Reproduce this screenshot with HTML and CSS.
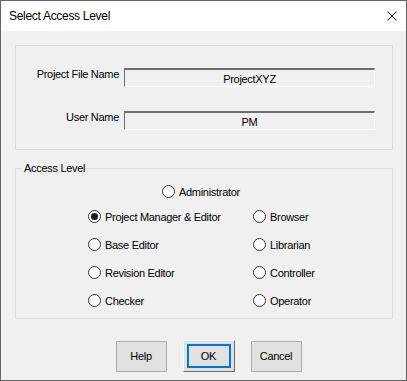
FILE: index.html
```html
<!DOCTYPE html>
<html lang="en">
<head>
    <meta charset="UTF-8">
    <title>Select Access Level</title>
    <link rel="stylesheet" href="styles.css">
</head>
<body>
    <div class="dialog">
        <div class="titlebar">
            <span class="title">Select Access Level</span>
            <svg class="close" width="10" height="10" viewBox="0 0 10 10">
                <path d="M0.5 0.5 L9.5 9.5 M9.5 0.5 L0.5 9.5" stroke="#000" stroke-width="1" fill="none"/>
            </svg>
        </div>
        <div class="content">
            <div class="group files">
                <label class="field-label">Project File Name</label>
                <div class="field-box">ProjectXYZ</div>
                <label class="field-label">User Name</label>
                <div class="field-box">PM</div>
            </div>

            <fieldset class="group levels">
                <legend>Access Level</legend>
                <div class="level-list">
                    <div class="radio admin"><span class="dot"></span>Administrator</div>
                    <div class="radio-grid">
                        <div class="radio"><span class="dot checked"></span>Project Manager &amp; Editor</div>
                        <div class="radio"><span class="dot"></span>Browser</div>
                        <div class="radio"><span class="dot"></span>Base Editor</div>
                        <div class="radio"><span class="dot"></span>Librarian</div>
                        <div class="radio"><span class="dot"></span>Revision Editor</div>
                        <div class="radio"><span class="dot"></span>Controller</div>
                        <div class="radio"><span class="dot"></span>Checker</div>
                        <div class="radio"><span class="dot"></span>Operator</div>
                    </div>
                </div>
            </fieldset>

            <div class="buttons">
                <button class="btn">Help</button>
                <button class="btn default">OK</button>
                <button class="btn">Cancel</button>
            </div>
        </div>
    </div>
</body>
</html>
```

FILE: styles.css
```css
body {
    margin: 0;
    padding: 0;
    background-color: #fff;
    font-family: "Liberation Sans", Arial, sans-serif;
    font-size: 11px;
    letter-spacing: -0.3px;
    color: #000;
}
.dialog {
    width: 407px;
    height: 381px;
    box-sizing: border-box;
    border: 1px solid #646464;
    background-color: #f0f0f0;
    display: flex;
    flex-direction: column;
}
.titlebar {
    height: 30px;
    background-color: #fff;
    display: flex;
    align-items: center;
    justify-content: space-between;
    padding: 0 9px 0 8px;
}
.title {
    font-size: 12px;
    letter-spacing: -0.3px;
}
.close {
    display: block;
}
.content {
    padding: 14px 13px 0 14px;
}
.group {
    border: 1px solid #dcdcdc;
    margin: 0;
}
.files {
    display: grid;
    grid-template-columns: 103px 251px;
    column-gap: 5px;
    row-gap: 24px;
    padding: 22px 0 19px 0;
    align-items: center;
}
.field-label {
    text-align: right;
    margin-top: -8px;
}
.field-box {
    height: 19px;
    box-sizing: border-box;
    border-style: solid;
    border-width: 2px 1px 1px 1px;
    border-color: #6d6d6d #fff #fff #6d6d6d;
    text-align: center;
    line-height: 17px;
    padding-top: 1px;
}
.levels {
    margin-top: 11px;
    padding: 0;
}
.levels legend {
    padding: 0 1px;
    margin-left: 7px;
    line-height: 14px;
}
.level-list {
    padding: 10px 0 11px 72px;
}
.radio {
    display: flex;
    align-items: center;
    gap: 4px;
    height: 13px;
    white-space: nowrap;
}
.admin {
    margin-left: 74px;
    margin-bottom: 12px;
}
.radio-grid {
    display: grid;
    grid-template-columns: 165px auto;
    row-gap: 15px;
}
.dot {
    width: 13px;
    height: 13px;
    box-sizing: border-box;
    border: 1px solid #333;
    border-radius: 50%;
    background-color: #fff;
    flex: none;
    position: relative;
}
.dot.checked::after {
    content: "";
    position: absolute;
    left: 2px;
    top: 2px;
    width: 7px;
    height: 7px;
    border-radius: 50%;
    background-color: #1a1a1a;
}
.buttons {
    display: flex;
    justify-content: center;
    align-items: center;
    gap: 16px;
    padding-left: 9px;
    margin-top: 21px;
}
.btn {
    width: 51px;
    height: 31px;
    box-sizing: border-box;
    border: 1px solid #adadad;
    background-color: #e1e1e1;
    font-family: inherit;
    font-size: 11px;
    letter-spacing: -0.3px;
    color: #000;
    padding: 0;
}
.btn.default {
    width: 52px;
    height: 32px;
    border-color: #fff #696969 #696969 #fff;
    box-shadow: inset 0 0 0 3px #e1e1e1, inset 0 0 0 5px #0078d7, inset -1px -1px 0 0 #a0a0a0;
}
```
